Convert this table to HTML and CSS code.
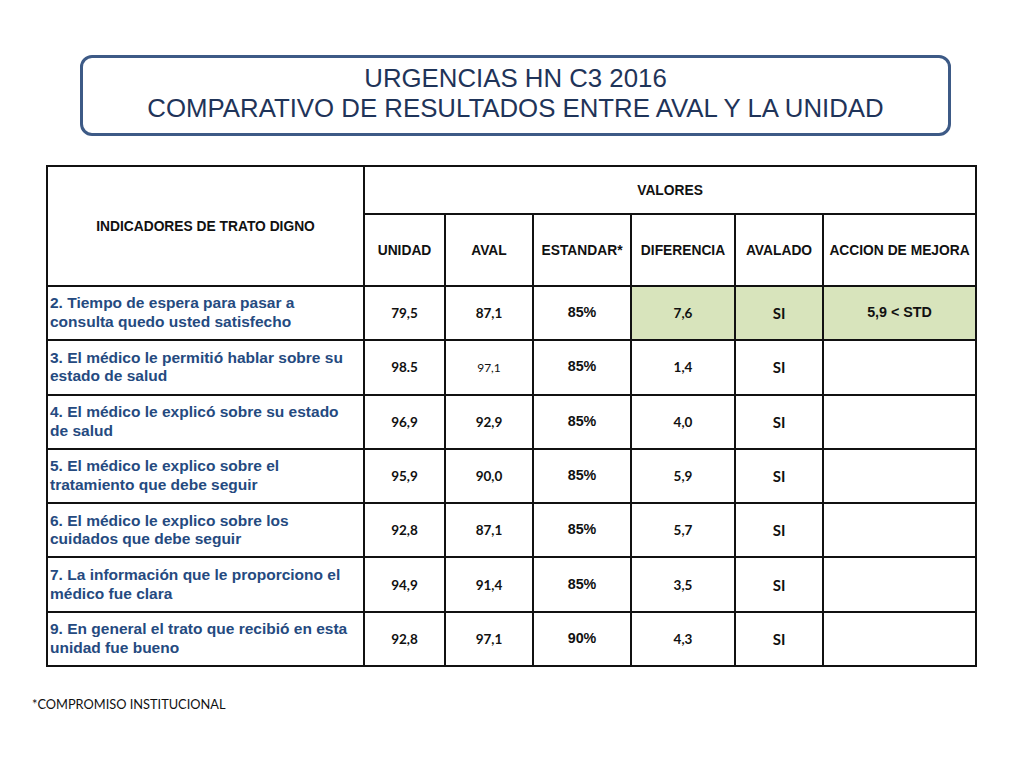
FILE: index.html
```html
<!DOCTYPE html>
<html lang="es">
<head>
<meta charset="utf-8">
<title>URGENCIAS HN C3 2016</title>
<link rel="stylesheet" href="styles.css">
</head>
<body>
<div class="page">
  <div class="title-box">
    <div class="title-line">URGENCIAS HN C3 2016</div>
    <div class="title-line">COMPARATIVO DE RESULTADOS ENTRE AVAL Y LA UNIDAD</div>
  </div>
  <table class="grid">
    <colgroup>
      <col class="c-ind"><col class="c-uni"><col class="c-aval"><col class="c-std"><col class="c-dif"><col class="c-avd"><col class="c-acc">
    </colgroup>
    <thead>
      <tr class="h1">
        <th rowspan="2" class="hd">INDICADORES DE TRATO DIGNO</th>
        <th colspan="6" class="hd">VALORES</th>
      </tr>
      <tr class="h2">
        <th class="hd">UNIDAD</th>
        <th class="hd">AVAL</th>
        <th class="hd">ESTANDAR*</th>
        <th class="hd">DIFERENCIA</th>
        <th class="hd">AVALADO</th>
        <th class="hd">ACCION DE MEJORA</th>
      </tr>
    </thead>
    <tbody>
      <tr>
        <td class="lbl">2. Tiempo de espera para pasar a consulta quedo usted satisfecho</td>
        <td class="num">79,5</td><td class="num">87,1</td><td class="pct">85%</td>
        <td class="num green">7,6</td><td class="num si green">SI</td><td class="pct green">5,9 &lt; STD</td>
      </tr>
      <tr>
        <td class="lbl">3. El médico le permitió hablar sobre su estado de salud</td>
        <td class="num">98.5</td><td class="num thin">97,1</td><td class="pct">85%</td>
        <td class="num">1,4</td><td class="num si">SI</td><td></td>
      </tr>
      <tr>
        <td class="lbl">4. El médico le explicó sobre su estado de salud</td>
        <td class="num">96,9</td><td class="num">92,9</td><td class="pct">85%</td>
        <td class="num">4,0</td><td class="num si">SI</td><td></td>
      </tr>
      <tr>
        <td class="lbl">5. El médico le explico sobre el tratamiento que debe seguir</td>
        <td class="num">95,9</td><td class="num">90,0</td><td class="pct">85%</td>
        <td class="num">5,9</td><td class="num si">SI</td><td></td>
      </tr>
      <tr>
        <td class="lbl">6. El médico le explico sobre los cuidados que debe seguir</td>
        <td class="num">92,8</td><td class="num">87,1</td><td class="pct">85%</td>
        <td class="num">5,7</td><td class="num si">SI</td><td></td>
      </tr>
      <tr>
        <td class="lbl">7. La información que le proporciono el médico fue clara</td>
        <td class="num">94,9</td><td class="num">91,4</td><td class="pct">85%</td>
        <td class="num">3,5</td><td class="num si">SI</td><td></td>
      </tr>
      <tr>
        <td class="lbl">9. En general el trato que recibió en esta unidad fue bueno</td>
        <td class="num">92,8</td><td class="num">97,1</td><td class="pct">90%</td>
        <td class="num">4,3</td><td class="num si">SI</td><td></td>
      </tr>
    </tbody>
  </table>
  <div class="note">*COMPROMISO INSTITUCIONAL</div>
</div>
</body>
</html>
```

FILE: styles.css
```css
html, body {
  margin: 0;
  padding: 0;
  background: #ffffff;
}

.page {
  width: 1024px;
  height: 768px;
  padding-top: 55px;
  box-sizing: border-box;
}

.title-box {
  margin-left: 80px;
  width: 871px;
  height: 81px;
  box-sizing: border-box;
  border: 3px solid #3d5a86;
  border-radius: 12px;
  display: flex;
  flex-direction: column;
  align-items: center;
  justify-content: center;
  padding-bottom: 6px;
  color: #1f3459;
  font-family: "Liberation Sans", Arial, sans-serif;
  font-size: 25.8px;
  line-height: 30px;
}

.title-line {
  white-space: nowrap;
}

.grid {
  margin-top: 29px;
  margin-left: 46px;
  width: 929px;
  border-collapse: collapse;
  table-layout: fixed;
}

.c-ind { width: 317px; }
.c-uni { width: 81px; }
.c-aval { width: 88px; }
.c-std { width: 98px; }
.c-dif { width: 104px; }
.c-avd { width: 88px; }
.c-acc { width: 153px; }

.grid th, .grid td {
  border: 2px solid #111111;
  padding: 0;
  text-align: center;
  vertical-align: middle;
}

.hd {
  font-family: "Liberation Sans", Arial, sans-serif;
  font-weight: bold;
  font-size: 13.8px;
  color: #111111;
  white-space: nowrap;
}

.h1 { height: 48px; }
.h2 { height: 72px; }

.grid tbody tr { height: 54.3px; }

.lbl {
  text-align: left !important;
  padding: 0 8px 0 2px !important;
  font-family: "Liberation Sans", Arial, sans-serif;
  font-weight: bold;
  font-size: 15.5px;
  line-height: 18.7px;
  color: #254a7f;
}

.num {
  font-family: Lato, "Open Sans", sans-serif;
  font-weight: bold;
  font-size: 13.5px;
  color: #111111;
}

.num.si {
  font-size: 15px;
}

.num.thin {
  font-weight: normal;
  font-size: 12px;
}

.pct {
  font-family: "Liberation Sans", Arial, sans-serif;
  font-weight: bold;
  font-size: 14.3px;
  color: #111111;
  padding-bottom: 2px !important;
}

.green {
  background: #d8e4bc;
}

.note {
  margin-top: 29px;
  margin-left: 32px;
  font-family: Lato, "Open Sans", sans-serif;
  font-size: 12.8px;
  color: #111111;
}
```
